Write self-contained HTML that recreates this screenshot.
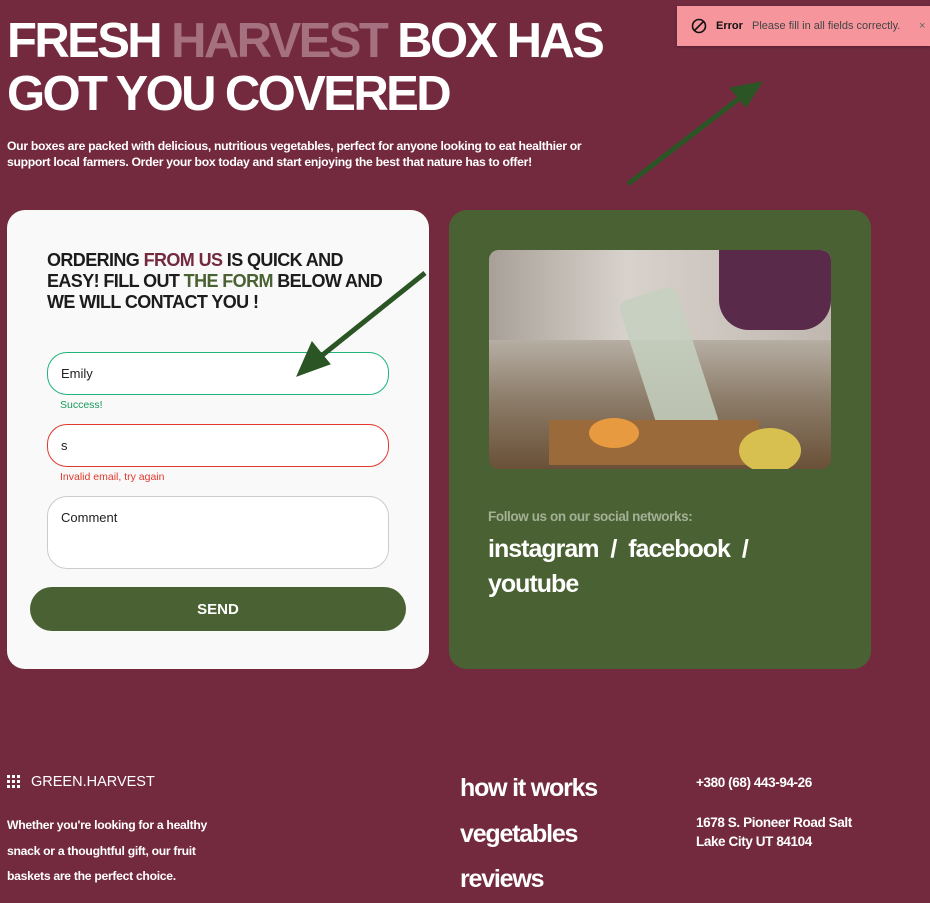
<!DOCTYPE html>
<html><head><meta charset="utf-8"><style>
*{margin:0;padding:0;box-sizing:border-box}
body{width:930px;height:900px;background:#732a3f;font-family:"Liberation Sans",sans-serif;position:relative;overflow:hidden;color:#fff}
h1{position:absolute;left:7px;top:15px;font-size:49px;line-height:53px;font-weight:bold;letter-spacing:-2.6px;color:#fff}
h1 span{color:#a5707f}
.intro{position:absolute;left:7px;top:138px;width:600px;font-size:12.2px;line-height:16px;font-weight:bold;letter-spacing:-.3px}
.card{position:absolute;left:7px;top:210px;width:422px;height:459px;background:#f9f9f9;border-radius:18px}
.card h2{position:absolute;left:40px;top:40px;width:350px;font-size:18px;line-height:21px;color:#1c1c1c;letter-spacing:-.6px}
.r{color:#732a3f}.g{color:#4a6233}
.inp{position:absolute;left:40px;width:342px;border-radius:20px;background:#fff;color:#222;font-size:13px;padding:13px 13px}
.msg{position:absolute;left:53px;font-size:10.5px}
.btn{position:absolute;left:23px;top:377px;width:376px;height:44px;border-radius:22px;background:#4a6233;color:#fff;font-weight:bold;font-size:15px;text-align:center;line-height:46px}
.green{position:absolute;left:449px;top:210px;width:422px;height:459px;background:#4a6233;border-radius:18px}
.photo{position:absolute;left:40px;top:40px;width:342px;height:219px;border-radius:10px;overflow:hidden;background:linear-gradient(180deg,#c9c2ba 0%,#b8b0a6 40%,#8a7a66 70%,#6a5038 100%)}
.toast{position:absolute;left:677px;top:6px;width:253px;height:40px;background:#f6959c;box-shadow:0 1px 3px rgba(0,0,0,.3);font-size:11px;color:#333;line-height:40px}
</style></head><body>
<h1>FRESH <span>HARVEST</span> BOX HAS<br>GOT YOU COVERED</h1>
<div class="intro">Our boxes are packed with delicious, nutritious vegetables, perfect for anyone looking to eat healthier or support local farmers. Order your box today and start enjoying the best that nature has to offer!</div>
<div class="card">
<h2>ORDERING <span class="r">FROM US</span> IS QUICK AND EASY! FILL OUT <span class="g">THE FORM</span> BELOW AND WE WILL CONTACT YOU !</h2>
<div class="inp" style="top:142px;height:43px;border:1px solid #1fb47a">Emily</div>
<div class="msg" style="top:189px;color:#1a9a5a">Success!</div>
<div class="inp" style="top:214px;height:43px;border:1px solid #e0392e">s</div>
<div class="msg" style="top:261px;color:#e0392e">Invalid email, try again</div>
<div class="inp" style="top:286px;height:73px;border:1px solid #ccc">Comment</div>
<div class="btn">SEND</div>
</div>
<div class="green">
<div class="photo">
<div style="position:absolute;left:0;top:0;width:342px;height:90px;background:linear-gradient(90deg,#a8a098,#d8d2cc 40%,#c0b8b0)"></div>
<div style="position:absolute;left:230px;top:0;width:112px;height:80px;background:#5a2a4a;border-radius:0 0 30px 30px"></div>
<div style="position:absolute;left:150px;top:40px;width:60px;height:150px;background:#c6d0c0;border-radius:10px;transform:rotate(-18deg);opacity:.85"></div>
<div style="position:absolute;left:60px;top:170px;width:210px;height:45px;background:#9a6a3a"></div>
<div style="position:absolute;left:250px;top:178px;width:62px;height:45px;border-radius:50%;background:#d8c050"></div>
<div style="position:absolute;left:100px;top:168px;width:50px;height:30px;border-radius:50%;background:#e89a40"></div>
</div>
<div style="position:absolute;left:39px;top:299px;font-size:13.5px;font-weight:bold;color:#a4b096;letter-spacing:-.4px">Follow us on our social networks:</div>
<div style="position:absolute;left:39px;top:322px;width:300px;font-size:25px;line-height:35px;font-weight:bold;letter-spacing:-1px">instagram &nbsp;/ &nbsp;facebook &nbsp;/<br>youtube</div>
</div>
<svg style="position:absolute;left:0;top:0" width="930" height="900">
<g stroke="#2b5524" stroke-width="5" fill="#2b5524">
<line x1="628" y1="184" x2="745" y2="94"/><polygon points="762,82 730,88 746,107" stroke-width="1"/>
<line x1="425" y1="273" x2="315" y2="361"/><polygon points="297,376 312,342 330,364" stroke-width="1"/>
</g></svg>
<div class="toast"><svg style="position:absolute;left:14px;top:12px" width="16" height="16"><circle cx="8" cy="8" r="6.5" fill="none" stroke="#111" stroke-width="1.6"/><line x1="3.5" y1="12.5" x2="12.5" y2="3.5" stroke="#111" stroke-width="1.6"/></svg>
<span style="position:absolute;left:39px;font-weight:bold;color:#111">Error</span><span style="position:absolute;left:75px;color:#444">Please fill in all fields correctly.</span><span style="position:absolute;left:242px;color:#666">×</span></div>
<div style="position:absolute;left:7px;top:775px;display:grid;grid-template-columns:repeat(3,3px);gap:2px"><i style="width:3px;height:3px;background:#fff"></i><i style="width:3px;height:3px;background:#fff"></i><i style="width:3px;height:3px;background:#fff"></i><i style="width:3px;height:3px;background:#fff"></i><i style="width:3px;height:3px;background:#fff"></i><i style="width:3px;height:3px;background:#fff"></i><i style="width:3px;height:3px;background:#fff"></i><i style="width:3px;height:3px;background:#fff"></i><i style="width:3px;height:3px;background:#fff"></i></div>
<div style="position:absolute;left:31px;top:774px;font-size:14.5px;letter-spacing:0">GREEN.HARVEST</div>
<div style="position:absolute;left:7px;top:813px;width:220px;font-size:12.2px;line-height:25.5px;font-weight:bold;letter-spacing:-.3px">Whether you're looking for a healthy snack or a thoughtful gift, our fruit baskets are the perfect choice.</div>
<div style="position:absolute;left:460px;top:766px;font-size:25px;line-height:45.5px;font-weight:bold;letter-spacing:-1.2px">how it works<br>vegetables<br>reviews</div>
<div style="position:absolute;left:696px;top:775px;font-size:13.5px;font-weight:bold;letter-spacing:-.4px">+380 (68) 443-94-26</div>
<div style="position:absolute;left:696px;top:813px;width:170px;font-size:13.5px;line-height:19px;font-weight:bold;letter-spacing:-.4px">1678 S. Pioneer Road Salt Lake City UT 84104</div>
</body></html>
